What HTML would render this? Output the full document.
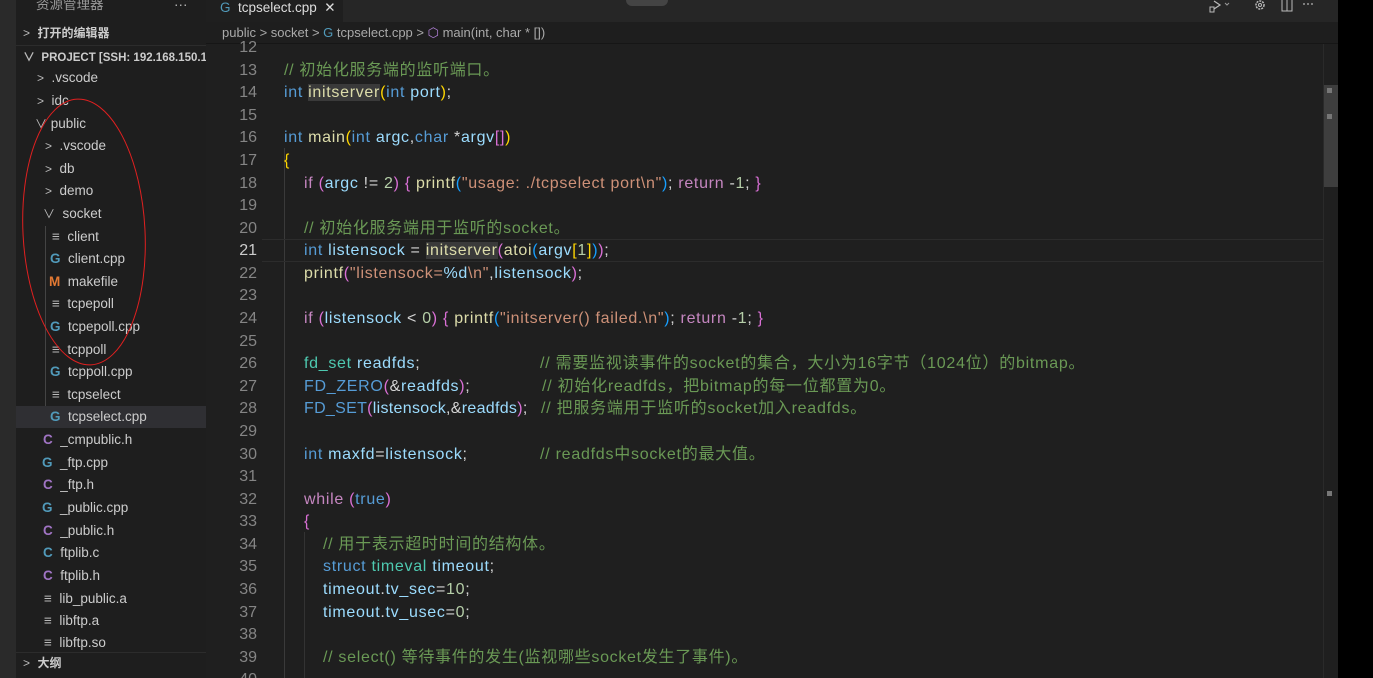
<!DOCTYPE html>
<html><head><meta charset="utf-8">
<style>
*{margin:0;padding:0;box-sizing:border-box}
html,body{width:1373px;height:678px;overflow:hidden}
body{background:#000;font-family:"Liberation Sans","Noto Sans CJK SC",sans-serif;position:relative}
#act{position:absolute;left:0;top:0;width:16px;height:678px;background:#2a2a2a}
#side{position:absolute;left:16px;top:0;width:190px;height:678px;background:#1e1e1e;color:#ccc;font-size:13.5px}
.r{position:absolute;height:22px;line-height:22px;white-space:nowrap}
.ch{color:#bbb;font-size:12px}
#ed{position:absolute;left:206px;top:0;width:1132px;height:678px;background:#1f1f1f;overflow:hidden}
#tabs{position:absolute;left:0;top:0;width:1132px;height:22px;background:#262626}
#tab{position:absolute;left:0;top:0;width:137px;height:22px;background:#1f1f1f;color:#ddd;font-size:13.5px;line-height:16px;padding-left:14px}
#bc{position:absolute;left:0;top:22px;width:1132px;height:22px;background:#1e1e1e;color:#aaa;font-size:13px;line-height:22px;padding-left:16px;border-bottom:1px solid #161616}
.L{position:absolute;left:0;height:23px;line-height:23px;font-size:16px;white-space:pre;width:1132px}
.n{position:absolute;right:1081px;color:#858585;text-align:right}
.c{position:absolute;left:78px;color:#d4d4d4;letter-spacing:0.7px}
.k{color:#569cd6}.f{color:#dcdcaa}.v{color:#9cdcfe}.s{color:#ce9178}.m{color:#6a9955}.p{color:#c586c0}.u{color:#b5cea8}.t{color:#4ec9b0}
.b1{color:#ffd700}.b2{color:#da70d6}.b3{color:#179fff}
.hl{background:#3a3a3a}
.cm{position:absolute;color:#6a9955;letter-spacing:0.75px}
</style></head><body>
<div id="act"></div>
<div id="side">
 <div class="r" style="left:20px;top:-6px;color:#999">资源管理器</div>
 <div class="r" style="left:158px;top:-6px;color:#bbb">···</div>
 <div class="r" style="left:7px;top:22px"><span class="ch">&gt;</span>&nbsp; <b style="font-size:12px">打开的编辑器</b></div>
 <div style="position:absolute;left:0;top:45px;width:190px;height:1px;background:#2c2c2c"></div>
 <div class="r" style="left:7px;top:46px;font-size:11.5px;font-weight:bold"><span class="ch">∨</span>&nbsp; PROJECT [SSH: 192.168.150.1...</div>
 <div class="r" style="left:21px;top:67px"><span class="ch">&gt;</span>&nbsp; .vscode</div>
 <div class="r" style="left:21px;top:90px"><span class="ch">&gt;</span>&nbsp; idc</div>
 <div class="r" style="left:19px;top:113px"><span class="ch">∨</span>&nbsp;public</div>
 <div class="r" style="left:29px;top:135px"><span class="ch">&gt;</span>&nbsp; .vscode</div>
 <div class="r" style="left:29px;top:158px"><span class="ch">&gt;</span>&nbsp; db</div>
 <div class="r" style="left:29px;top:180px"><span class="ch">&gt;</span>&nbsp; demo</div>
 <div class="r" style="left:27px;top:203px"><span class="ch">∨</span>&nbsp; socket</div>
 <div style="position:absolute;left:29px;top:226px;width:1px;height:202px;background:#444"></div>
 <div style="position:absolute;left:0;top:406px;width:190px;height:22px;background:#2f2f33"></div>
 <div class="r" style="left:36px;top:226px"><span style="color:#bbb">≡</span>&nbsp; client</div>
 <div class="r" style="left:34px;top:248px"><span style="color:#519aba;font-weight:bold">G</span>&nbsp; client.cpp</div>
 <div class="r" style="left:33px;top:271px"><span style="color:#e37933;font-weight:bold">M</span>&nbsp; makefile</div>
 <div class="r" style="left:36px;top:293px"><span style="color:#bbb">≡</span>&nbsp; tcpepoll</div>
 <div class="r" style="left:34px;top:316px"><span style="color:#519aba;font-weight:bold">G</span>&nbsp; tcpepoll.cpp</div>
 <div class="r" style="left:36px;top:339px"><span style="color:#bbb">≡</span>&nbsp; tcppoll</div>
 <div class="r" style="left:34px;top:361px"><span style="color:#519aba;font-weight:bold">G</span>&nbsp; tcppoll.cpp</div>
 <div class="r" style="left:36px;top:384px"><span style="color:#bbb">≡</span>&nbsp; tcpselect</div>
 <div class="r" style="left:34px;top:406px"><span style="color:#519aba;font-weight:bold">G</span>&nbsp; tcpselect.cpp</div>
 <div class="r" style="left:27px;top:429px"><span style="color:#a074c4;font-weight:bold">C</span>&nbsp; _cmpublic.h</div>
 <div class="r" style="left:26px;top:452px"><span style="color:#519aba;font-weight:bold">G</span>&nbsp; _ftp.cpp</div>
 <div class="r" style="left:27px;top:474px"><span style="color:#a074c4;font-weight:bold">C</span>&nbsp; _ftp.h</div>
 <div class="r" style="left:26px;top:497px"><span style="color:#519aba;font-weight:bold">G</span>&nbsp; _public.cpp</div>
 <div class="r" style="left:27px;top:520px"><span style="color:#a074c4;font-weight:bold">C</span>&nbsp; _public.h</div>
 <div class="r" style="left:27px;top:542px"><span style="color:#519aba;font-weight:bold">C</span>&nbsp; ftplib.c</div>
 <div class="r" style="left:27px;top:565px"><span style="color:#a074c4;font-weight:bold">C</span>&nbsp; ftplib.h</div>
 <div class="r" style="left:28px;top:588px"><span style="color:#bbb">≡</span>&nbsp; lib_public.a</div>
 <div class="r" style="left:28px;top:610px"><span style="color:#bbb">≡</span>&nbsp; libftp.a</div>
 <div class="r" style="left:28px;top:632px"><span style="color:#bbb">≡</span>&nbsp; libftp.so</div>
 <div style="position:absolute;left:0;top:652px;width:190px;height:1px;background:#2c2c2c"></div>
 <div class="r" style="left:7px;top:652px"><span class="ch">&gt;</span>&nbsp; <b style="font-size:12px">大纲</b></div>
</div>
<svg style="position:absolute;left:0;top:0" width="206" height="678"><ellipse cx="84" cy="232" rx="61" ry="133" fill="none" stroke="#e02020" stroke-width="1" transform="rotate(-3 84 232)"/></svg>
<div id="ed">
 <div id="tabs"><div id="tab"><span style="color:#519aba">G</span>&nbsp; tcpselect.cpp &nbsp;✕</div>
  <div style="position:absolute;left:420px;top:0;width:42px;height:6px;background:#444;border-radius:0 0 6px 6px"></div>
  <svg style="position:absolute;left:1000px;top:0" width="110" height="14">
   <path d="M8 1 L14 5 L8 9" fill="none" stroke="#bbb" stroke-width="1.2"/>
   <rect x="4" y="7" width="4" height="5" fill="none" stroke="#bbb"/>
   <path d="M19 3 L21 5 L23 3" fill="none" stroke="#999"/>
   <circle cx="54" cy="5" r="4" fill="none" stroke="#bbb" stroke-width="1.5" stroke-dasharray="2 1"/>
   <circle cx="54" cy="5" r="1.5" fill="none" stroke="#bbb"/>
   <rect x="76" y="-1" width="10" height="12" fill="none" stroke="#bbb"/>
   <line x1="81" y1="-1" x2="81" y2="11" stroke="#bbb"/>
   <circle cx="98" cy="4" r="0.9" fill="#bbb"/><circle cx="102" cy="4" r="0.9" fill="#bbb"/><circle cx="106" cy="4" r="0.9" fill="#bbb"/>
  </svg>
 </div>
 <div id="bc">public &gt; socket &gt; <span style="color:#519aba">G</span> tcpselect.cpp &gt; <span style="color:#b180d7">⬡</span> main(int, char * [])</div>
 <div style="position:absolute;left:78px;top:148px;width:1px;height:530px;background:#3a3a3a"></div>
 <div style="position:absolute;left:98px;top:532px;width:1px;height:146px;background:#333"></div>
 <div style="position:absolute;left:1117px;top:44px;width:1px;height:634px;background:#2a2a2a"></div>
 <div style="position:absolute;left:1118px;top:85px;width:14px;height:102px;background:#3e3e3e"></div>
 <div style="position:absolute;left:1121px;top:88px;width:5px;height:5px;background:#777"></div>
 <div style="position:absolute;left:1121px;top:114px;width:5px;height:5px;background:#777"></div>
 <div style="position:absolute;left:1121px;top:491px;width:5px;height:5px;background:#777"></div>
 <div style="position:absolute;left:56px;top:239px;width:1062px;height:23px;border-top:1px solid #2c2c2c;border-bottom:1px solid #2c2c2c"></div>

 <div class="L" style="top:36px"><span class="n">12</span></div>
 <div class="L" style="top:59px"><span class="n">13</span><span class="c m">// 初始化服务端的监听端口。</span></div>
 <div class="L" style="top:81px"><span class="n">14</span><span class="c"><span class="k">int</span> <span class="f hl">initserver</span><span class="b1">(</span><span class="k">int</span> <span class="v">port</span><span class="b1">)</span>;</span></div>
 <div class="L" style="top:104px"><span class="n">15</span></div>
 <div class="L" style="top:126px"><span class="n">16</span><span class="c"><span class="k">int</span> <span class="f">main</span><span class="b1">(</span><span class="k">int</span> <span class="v">argc</span>,<span class="k">char</span> *<span class="v">argv</span><span class="b2">[]</span><span class="b1">)</span></span></div>
 <div class="L" style="top:149px"><span class="n">17</span><span class="c b1">{</span></div>
 <div class="L" style="top:172px"><span class="n">18</span><span class="c" style="left:98px"><span class="p">if</span> <span class="b2">(</span><span class="v">argc</span> != <span class="u">2</span><span class="b2">)</span> <span class="b2">{</span> <span class="f">printf</span><span class="b3">(</span><span class="s">"usage: ./tcpselect port\n"</span><span class="b3">)</span>; <span class="p">return</span> -<span class="u">1</span>; <span class="b2">}</span></span></div>
 <div class="L" style="top:194px"><span class="n">19</span></div>
 <div class="L" style="top:217px"><span class="n">20</span><span class="c m" style="left:98px">// 初始化服务端用于监听的socket。</span></div>
 <div class="L" style="top:239px"><span class="n" style="color:#ccc">21</span><span class="c" style="left:98px"><span class="k">int</span> <span class="v">listensock</span> = <span class="f hl">initserver</span><span class="b2">(</span><span class="f">atoi</span><span class="b3">(</span><span class="v">argv</span><span class="b1">[</span><span class="u">1</span><span class="b1">]</span><span class="b3">)</span><span class="b2">)</span>;</span></div>
 <div class="L" style="top:262px"><span class="n">22</span><span class="c" style="left:98px"><span class="f">printf</span><span class="b2">(</span><span class="s">"listensock=</span><span class="v">%d</span><span class="s">\n"</span>,<span class="v">listensock</span><span class="b2">)</span>;</span></div>
 <div class="L" style="top:284px"><span class="n">23</span></div>
 <div class="L" style="top:307px"><span class="n">24</span><span class="c" style="left:98px"><span class="p">if</span> <span class="b2">(</span><span class="v">listensock</span> &lt; <span class="u">0</span><span class="b2">)</span> <span class="b2">{</span> <span class="f">printf</span><span class="b3">(</span><span class="s">"initserver() failed.\n"</span><span class="b3">)</span>; <span class="p">return</span> -<span class="u">1</span>; <span class="b2">}</span></span></div>
 <div class="L" style="top:330px"><span class="n">25</span></div>
 <div class="L" style="top:352px"><span class="n">26</span><span class="c" style="left:98px"><span class="t">fd_set</span> <span class="v">readfds</span>;</span><span class="cm" style="left:334px">// 需要监视读事件的socket的集合，大小为16字节（1024位）的bitmap。</span></div>
 <div class="L" style="top:375px"><span class="n">27</span><span class="c" style="left:98px"><span class="k">FD_ZERO</span><span class="b2">(</span>&amp;<span class="v">readfds</span><span class="b2">)</span>;</span><span class="cm" style="left:336px">// 初始化readfds，把bitmap的每一位都置为0。</span></div>
 <div class="L" style="top:397px"><span class="n">28</span><span class="c" style="left:98px;letter-spacing:0.3px"><span class="k">FD_SET</span><span class="b2">(</span><span class="v">listensock</span>,&amp;<span class="v">readfds</span><span class="b2">)</span>;</span><span class="cm" style="left:335px">// 把服务端用于监听的socket加入readfds。</span></div>
 <div class="L" style="top:420px"><span class="n">29</span></div>
 <div class="L" style="top:443px"><span class="n">30</span><span class="c" style="left:98px"><span class="k">int</span> <span class="v">maxfd</span>=<span class="v">listensock</span>;</span><span class="cm" style="left:334px">// readfds中socket的最大值。</span></div>
 <div class="L" style="top:465px"><span class="n">31</span></div>
 <div class="L" style="top:488px"><span class="n">32</span><span class="c" style="left:98px"><span class="p">while</span> <span class="b2">(</span><span class="k">true</span><span class="b2">)</span></span></div>
 <div class="L" style="top:510px"><span class="n">33</span><span class="c b2" style="left:98px">{</span></div>
 <div class="L" style="top:533px"><span class="n">34</span><span class="c m" style="left:117px">// 用于表示超时时间的结构体。</span></div>
 <div class="L" style="top:555px"><span class="n">35</span><span class="c" style="left:117px"><span class="k">struct</span> <span class="t">timeval</span> <span class="v">timeout</span>;</span></div>
 <div class="L" style="top:578px"><span class="n">36</span><span class="c" style="left:117px"><span class="v">timeout</span>.<span class="v">tv_sec</span>=<span class="u">10</span>;</span></div>
 <div class="L" style="top:601px"><span class="n">37</span><span class="c" style="left:117px"><span class="v">timeout</span>.<span class="v">tv_usec</span>=<span class="u">0</span>;</span></div>
 <div class="L" style="top:623px"><span class="n">38</span></div>
 <div class="L" style="top:646px"><span class="n">39</span><span class="c m" style="left:117px">// select() 等待事件的发生(监视哪些socket发生了事件)。</span></div>
 <div class="L" style="top:668px"><span class="n">40</span></div>
</div>
</body></html>
